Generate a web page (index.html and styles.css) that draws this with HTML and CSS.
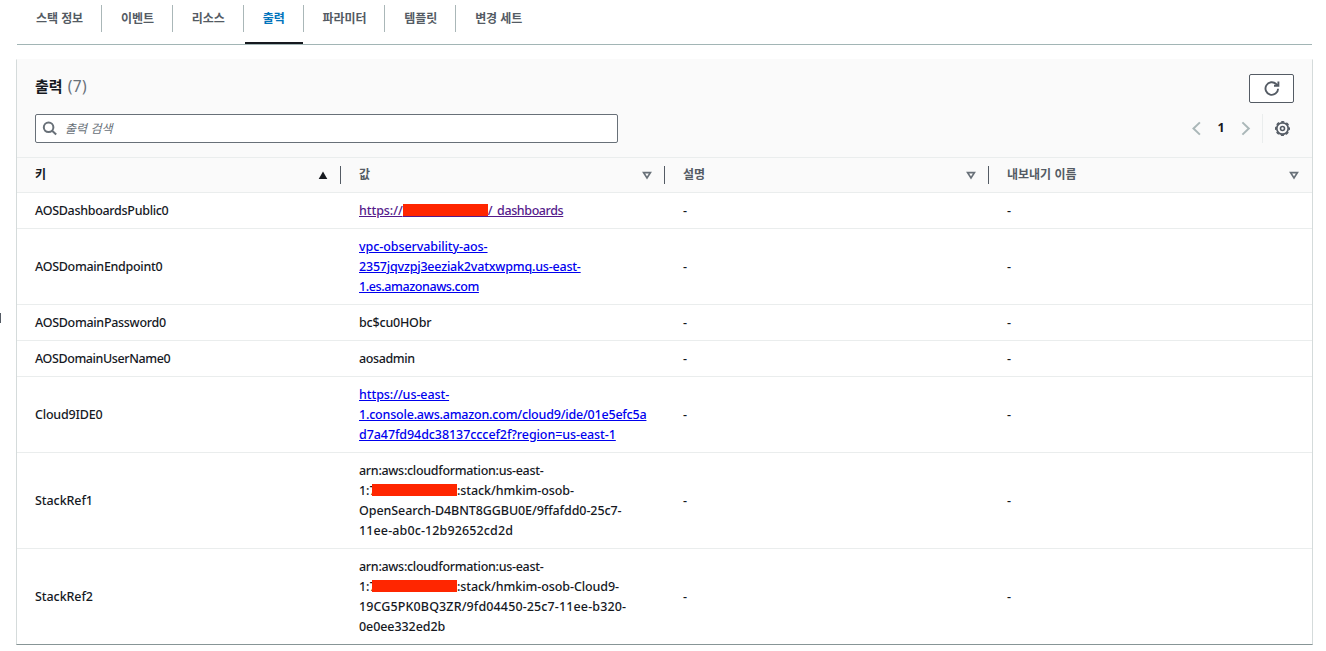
FILE: index.html
```html
<!DOCTYPE html>
<html lang="ko">
<head>
  <meta charset="UTF-8" />
  <meta name="viewport" content="width=device-width, initial-scale=1.0"/>
  <title>CloudFormation - 스택 출력</title>
  <link rel="stylesheet" href="styles.css">
</head>
<body>
  <div class="side-edge"></div>

  <nav class="tabs">
    <a class="tab">스택 정보</a>
    <a class="tab">이벤트</a>
    <a class="tab">리소스</a>
    <a class="tab active">출력</a>
    <a class="tab">파라미터</a>
    <a class="tab">템플릿</a>
    <a class="tab">변경 세트</a>
  </nav>

  <section class="panel">
    <div class="panel-header">
      <div class="title-row">
        <h2>출력 <span class="count">(7)</span></h2>
        <button class="refresh">
          <svg width="18" height="18" viewBox="0 0 18 18" fill="none" stroke="#545b64" stroke-width="1.9">
            <path d="M15.1 8.7A6.3 6.3 0 1 1 13.2 4L14.6 5.2"/>
            <path d="M15.4 1.6V5.7H11"/>
          </svg>
        </button>
      </div>
      <div class="filter-row">
        <div class="search">
          <svg width="16" height="16" viewBox="0 0 16 16" fill="none" stroke="#687078" stroke-width="2">
            <circle cx="6.6" cy="6.3" r="4.8"/>
            <path d="M10.1 9.8L14.2 13.6"/>
          </svg>
          <span class="placeholder">출력 검색</span>
        </div>
        <div class="pagination">
          <svg width="10" height="16" viewBox="0 0 10 16" fill="none" stroke="#aab7b8" stroke-width="2"><path d="M7.9 1.4L1.5 7.5L7.9 13.6"/></svg>
          <span class="page">1</span>
          <svg width="10" height="16" viewBox="0 0 10 16" fill="none" stroke="#aab7b8" stroke-width="2"><path d="M1.4 1.4L7.8 7.5L1.4 13.6"/></svg>
          <span class="settings">
            <svg width="16" height="16" viewBox="0 0 16 16" fill="none" stroke="#545b64">
              <circle cx="7.5" cy="7.5" r="5.7" stroke-width="1.7"/>
              <circle cx="7.5" cy="7.5" r="6.8" stroke-width="1.4" stroke-dasharray="3.1 2.24" stroke-dashoffset="1.55"/>
              <circle cx="7.5" cy="7.5" r="2" stroke-width="1.6"/>
            </svg>
          </span>
        </div>
      </div>
    </div>

    <table>
      <colgroup>
        <col class="col">
        <col class="col">
        <col class="col">
        <col>
      </colgroup>
      <thead>
        <tr>
          <th class="sorted"><div class="th"><span>키</span> <svg class="sort" width="10" height="9" viewBox="0 0 10 9"><path d="M5 0.5L9.3 8H0.7Z" fill="#16191f"/></svg></div></th>
          <th><div class="th"><span>값</span> <svg class="sort" width="10" height="9" viewBox="0 0 10 9"><path d="M1.6 1.6H8.4L5 7Z" fill="none" stroke="#687078" stroke-width="1.7"/></svg></div></th>
          <th><div class="th"><span>설명</span> <svg class="sort" width="10" height="9" viewBox="0 0 10 9"><path d="M1.6 1.6H8.4L5 7Z" fill="none" stroke="#687078" stroke-width="1.7"/></svg></div></th>
          <th><div class="th"><span>내보내기 이름</span> <svg class="sort" width="10" height="9" viewBox="0 0 10 9"><path d="M1.6 1.6H8.4L5 7Z" fill="none" stroke="#687078" stroke-width="1.7"/></svg></div></th>
        </tr>
      </thead>
      <tbody>
        <tr>
          <td class="key">AOSDashboardsPublic0</td>
          <td><a class="visited">https://<span class="mask"></span><span class="tight">/_dashboards</span></a></td>
          <td>-</td>
          <td>-</td>
        </tr>
        <tr>
          <td class="key">AOSDomainEndpoint0</td>
          <td><a>vpc-observability-aos-<br><span class="snug">2357jqvzpj3eeziak2vatxwpmq.us-east-</span><br><span class="tight">1.es.amazonaws.com</span></a></td>
          <td>-</td>
          <td>-</td>
        </tr>
        <tr>
          <td class="key">AOSDomainPassword0</td>
          <td class="snug">bc$cu0HObr</td>
          <td>-</td>
          <td>-</td>
        </tr>
        <tr>
          <td class="tight">AOSDomainUserName0</td>
          <td class="tight">aosadmin</td>
          <td>-</td>
          <td>-</td>
        </tr>
        <tr>
          <td class="snug">Cloud9IDE0</td>
          <td><a>https://us-east-<br><span class="snug">1.console.aws.amazon.com/cloud9/ide/01e5efc5a</span><br>d7a47fd94dc38137cccef2f?region=us-east-1</a></td>
          <td>-</td>
          <td>-</td>
        </tr>
        <tr>
          <td>StackRef1</td>
          <td><span class="key">arn:aws:cloudformation:us-east-</span><br>1:7<span class="mask over"></span>:stack/hmkim-osob-<br>OpenSearch-D4BNT8GGBU0E/9ffafdd0-25c7-<br><span class="wide">11ee-ab0c-12b92652cd2d</span></td>
          <td>-</td>
          <td>-</td>
        </tr>
        <tr>
          <td>StackRef2</td>
          <td><span class="key">arn:aws:cloudformation:us-east-</span><br>1:7<span class="mask over"></span>:stack/hmkim-osob-Cloud9-<br><span class="wide">19CG5PK0BQ3ZR/9fd04450-25c7-11ee-b320-</span><br>0e0ee332ed2b</td>
          <td>-</td>
          <td>-</td>
        </tr>
      </tbody>
    </table>
  </section>
</body>
</html>
```
FILE: styles.css
```css
* {
  box-sizing: border-box;
}

body {
  margin: 0;
  padding: 0 13px 0 16px;
  height: 651px;
  overflow: hidden;
  background: #fff;
  color: #16191f;
  font-family: "Noto Sans", "Noto Sans CJK KR", sans-serif;
  font-size: 12.5px;
  line-height: 20px;
}

/* edge of the collapsed side panel */
.side-edge {
  position: absolute;
  left: 0;
  top: 313px;
  width: 1px;
  height: 10px;
  background: #545b64;
}

.tabs {
  display: flex;
  height: 45px;
  margin: 0 1px;
  padding-top: 5px;
  border-bottom: 1px solid #a2b5b5;
  font-family: "Noto Sans CJK KR", sans-serif;
  font-size: 12px;
  font-weight: bold;
  letter-spacing: -0.1px;
  color: #545b64;
}

.tab {
  height: 27px;
  padding: 0 18px 0 19px;
  line-height: 26px;
  border-right: 1px solid #aab7b8;
}

.tab:last-child {
  border-right: none;
}

.tab.active {
  position: relative;
  color: #0073bb;
}

.tab.active::after {
  content: "";
  position: absolute;
  left: 1px;
  right: 0;
  top: 37px;
  height: 2px;
  background: #16191f;
}

.panel {
  margin-top: 14px;
  height: 586px;
  border: 1px solid #d5dbdb;
  border-top-color: #fafafa;
  border-bottom-color: #879596;
}

.panel-header {
  height: 97px;
  padding: 14px 18px 0;
  background: #fafafa;
}

.title-row, .filter-row {
  display: flex;
  justify-content: space-between;
}

h2 {
  margin: 0;
  font-family: "Noto Sans CJK KR", sans-serif;
  font-size: 15px;
  line-height: 23px;
}

.count {
  margin-left: 1px;
  font-family: "Noto Sans", sans-serif;
  font-size: 15.5px;
  font-weight: normal;
  letter-spacing: 0.3px;
  color: #687078;
}

.refresh {
  display: flex;
  align-items: center;
  justify-content: center;
  width: 45px;
  height: 29px;
  padding: 0;
  background: #fff;
  border: 1px solid #545b64;
  border-radius: 2px;
}

.filter-row {
  margin-top: 11px;
}

.search {
  display: flex;
  align-items: center;
  gap: 7px;
  width: 583px;
  height: 29px;
  padding-left: 6px;
  background: #fff;
  border: 1px solid #687078;
  border-radius: 2px;
}

.placeholder {
  padding-bottom: 2px;
  font-family: "Noto Sans CJK KR", sans-serif;
  font-size: 12px;
  font-style: italic;
  color: #687078;
}

.pagination {
  display: flex;
  align-items: center;
  height: 29px;
}

.page {
  width: 39px;
  padding: 0 1px 2px 0;
  text-align: center;
  font-weight: bold;
}

.settings {
  display: flex;
  align-items: center;
  height: 29px;
  margin-left: 11px;
  padding: 0 3px 0 12px;
  border-left: 1px solid #eaeded;
}

table {
  width: 100%;
  table-layout: fixed;
  border-collapse: separate;
  border-spacing: 0;
}

.col {
  width: 324px;
}

th {
  height: 36px;
  padding: 0;
  background: #fafafa;
  border-top: 1px solid #eaeded;
  border-bottom: 1px solid #eaeded;
  font-family: "Noto Sans CJK KR", sans-serif;
  font-size: 12px;
  color: #545b64;
}

th.sorted {
  color: #16191f;
}

.th {
  display: flex;
  align-items: center;
  justify-content: space-between;
  height: 18px;
  padding: 0 12px 0 18px;
  border-right: 1px solid #545b64;
}

.th span {
  padding-bottom: 2px;
}

th:last-child .th {
  padding-right: 13px;
  border-right: none;
}

td {
  padding: 8px 18px 7px;
  border-bottom: 1px solid #eaeded;
  font-weight: 500;
  letter-spacing: -0.08px;
  vertical-align: middle;
  white-space: nowrap;
}

tr:last-child td {
  border-bottom: none;
}

td a {
  color: #0000ee;
  text-decoration: underline;
}

td a.visited {
  color: #551a8b;
}

.key {
  letter-spacing: -0.3px;
}

.tight {
  letter-spacing: -0.4px;
}

.snug {
  letter-spacing: -0.2px;
}

.wide {
  letter-spacing: 0.12px;
}

/* redacted account ids */
.mask {
  display: inline-block;
  width: 85px;
  height: 12px;
  background: #ff2600;
  vertical-align: -1px;
}

.visited .mask {
  height: 13px;
  border-bottom: 1px solid #551a8b;
  vertical-align: -2px;
}

.mask.over {
  margin-left: -4.5px;
}
```
